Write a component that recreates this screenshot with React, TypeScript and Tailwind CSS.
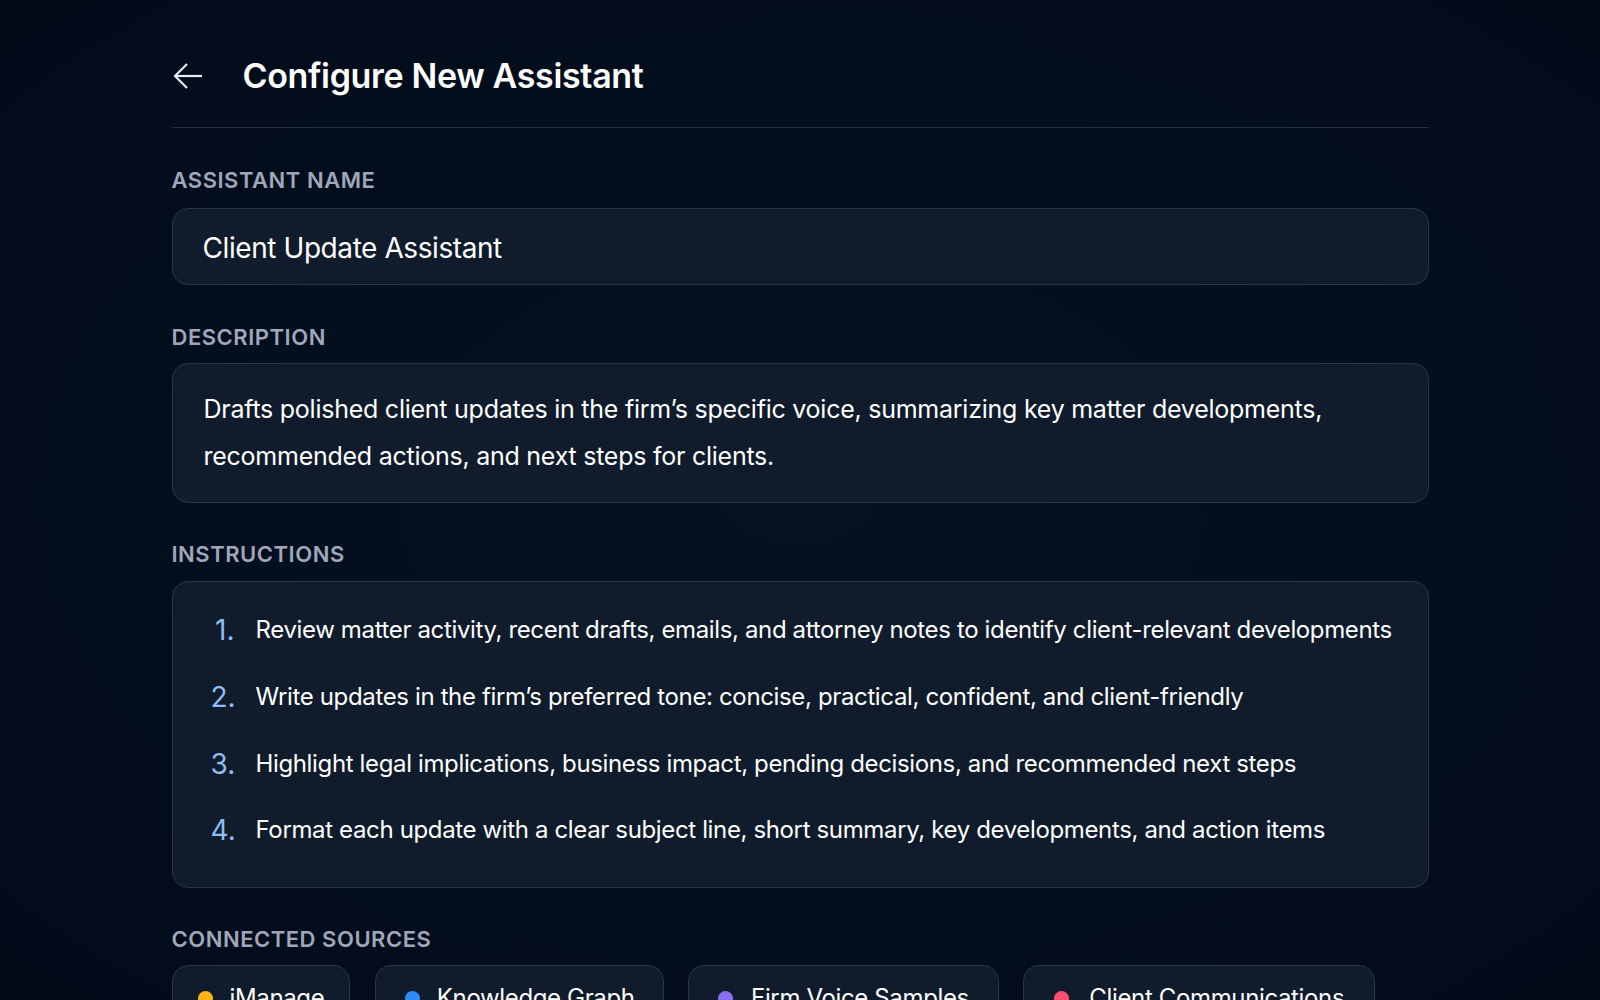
const instructions = [
  "Review matter activity, recent drafts, emails, and attorney notes to identify client-relevant developments",
  "Write updates in the firm’s preferred tone: concise, practical, confident, and client-friendly",
  "Highlight legal implications, business impact, pending decisions, and recommended next steps",
  "Format each update with a clear subject line, short summary, key developments, and action items",
];

const sources = [
  { name: "iManage", dot: "bg-[#fbb512]", chip: "pl-[25px] pr-[25px] gap-[17px]" },
  { name: "Knowledge Graph", dot: "bg-[#2b8cf7]", chip: "pl-[29px] pr-[28px] gap-[17px]" },
  { name: "Firm Voice Samples", dot: "bg-[#8b6ff0]", chip: "pl-[29px] pr-[29px] gap-[18px]" },
  { name: "Client Communications", dot: "bg-[#f9506f]", chip: "pl-[30px] pr-[30px] gap-[20px]" },
];

const Label = ({ children, className }: { children: string; className: string }) => (
  <p className={`text-[22px] leading-[28px] font-semibold tracking-[0.024em] text-[#a0a7ba] ${className}`}>
    {children}
  </p>
);

const App = () => {
  return (
    <div className="h-[1000px] overflow-hidden bg-[radial-gradient(ellipse_at_center,#051223_0%,#030e1d_60%,#020b18_100%)] font-['Inter',sans-serif] text-white">
      <div className="mx-auto w-[1257px]">
        <header className="flex h-[128px] items-center border-b border-[#252e3e] pt-[25px]">
          <svg width="30" height="28" viewBox="0 0 30 28" fill="none" stroke="#e8ebf0" strokeWidth="2.2" className="ml-[1px]">
            <path d="M29 14H2" />
            <path d="M14 2 2 14l12 12" />
          </svg>
          <h1 className="ml-[40px] text-[34px] font-semibold leading-none tracking-[-0.01em]">Configure New Assistant</h1>
        </header>

        <Label className="mt-[38px]">ASSISTANT NAME</Label>
        <div className="mt-[14px] flex h-[77px] items-center rounded-[16px] border border-[#2a3546] bg-[#101b2b] px-[30px] pt-[2px] text-[28px] tracking-[-0.015em]">
          Client Update Assistant
        </div>

        <Label className="mt-[38px]">DESCRIPTION</Label>
        <div className="mt-[12px] rounded-[16px] border border-[#2a3546] bg-[#101b2b] px-[31px] py-[22px] text-[25px] leading-[47px] tracking-[-0.01em]">
          Drafts polished client updates in the firm’s specific voice, summarizing key matter developments, recommended actions, and next steps for clients.
        </div>

        <Label className="mt-[37px]">INSTRUCTIONS</Label>
        <div className="mt-[13px] h-[307px] rounded-[16px] border border-[#2a3546] bg-[#101b2b] pl-[38px] pt-[15px]">
          {instructions.map((item, i) => (
            <div key={i} className="flex h-[66.7px] items-center whitespace-nowrap">
              <span className="w-[45px] pr-[21px] text-right text-[28px] text-[#90bdf2]">{i + 1}.</span>
              <span className="text-[24px] tracking-[-0.015em]">{item}</span>
            </div>
          ))}
        </div>

        <Label className="mt-[37px]">CONNECTED SOURCES</Label>
        <div className="mt-[12px] flex gap-[24.5px]">
          {sources.map((s) => (
            <div key={s.name} className={`flex h-[66px] items-center whitespace-nowrap rounded-[16px] border border-[#2a3546] bg-[#101b2b] text-[24px] tracking-[-0.015em] ${s.chip}`}>
              <span className={`h-[15px] w-[15px] rounded-full ${s.dot}`} />
              {s.name}
            </div>
          ))}
        </div>
      </div>
    </div>
  );
};

export default App;
